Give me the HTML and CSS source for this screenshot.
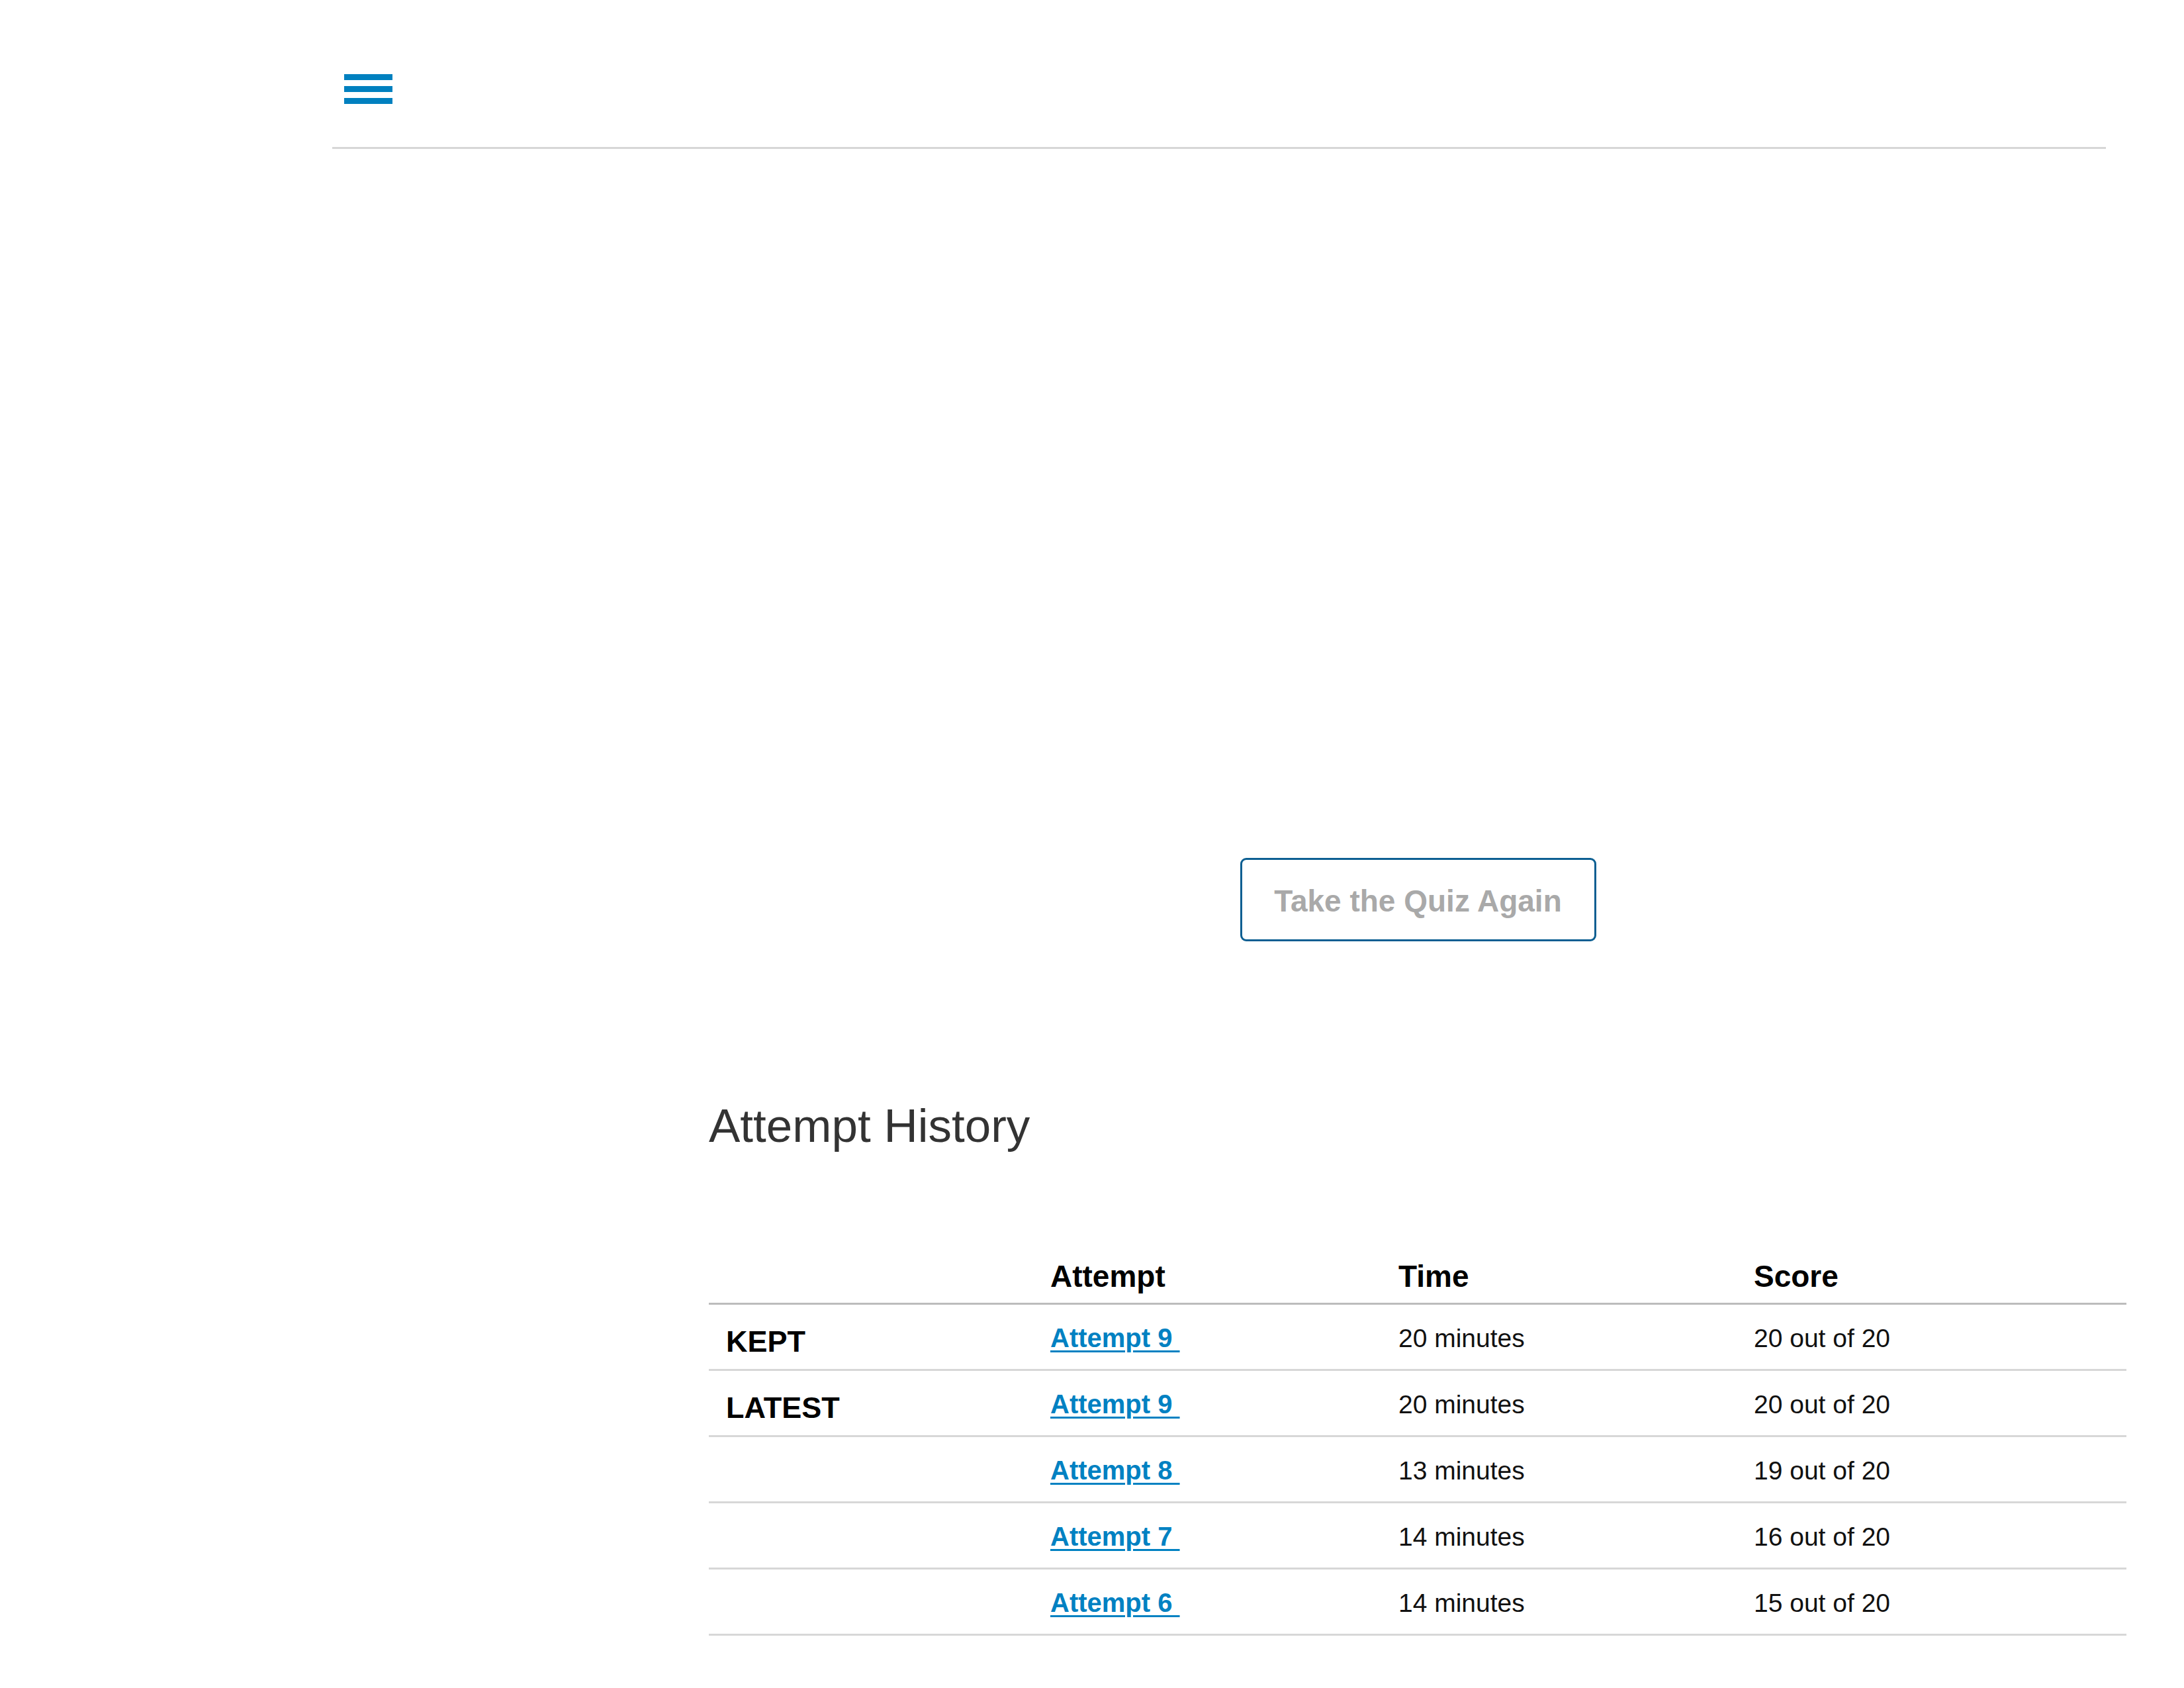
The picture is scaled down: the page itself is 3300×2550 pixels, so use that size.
FILE: index.html
```html
<!DOCTYPE html>
<html lang="en">
<head>
<meta charset="utf-8">
<title>Quiz Results</title>
<link rel="stylesheet" href="styles.css">
</head>
<body>
<header class="topbar">
  <button class="menu-toggle" type="button" aria-label="Open menu">
    <span class="menu-bar"></span>
    <span class="menu-bar"></span>
    <span class="menu-bar"></span>
  </button>
</header>
<main class="content">
  <section class="quiz-summary"></section>
  <div class="retake">
    <button class="retake-btn" type="button">Take the Quiz Again</button>
  </div>
  <h2 class="history-title">Attempt History</h2>
  <table class="history">
    <thead>
      <tr>
        <th class="col-label"></th>
        <th class="col-attempt">Attempt</th>
        <th class="col-time">Time</th>
        <th class="col-score">Score</th>
      </tr>
    </thead>
    <tbody>
      <tr>
        <th class="row-label" scope="row">KEPT</th>
        <td><a href="#" class="attempt-link">Attempt 9 </a></td>
        <td>20 minutes</td>
        <td>20 out of 20</td>
      </tr>
      <tr>
        <th class="row-label" scope="row">LATEST</th>
        <td><a href="#" class="attempt-link">Attempt 9 </a></td>
        <td>20 minutes</td>
        <td>20 out of 20</td>
      </tr>
      <tr>
        <th class="row-label" scope="row"></th>
        <td><a href="#" class="attempt-link">Attempt 8 </a></td>
        <td>13 minutes</td>
        <td>19 out of 20</td>
      </tr>
      <tr>
        <th class="row-label" scope="row"></th>
        <td><a href="#" class="attempt-link">Attempt 7 </a></td>
        <td>14 minutes</td>
        <td>16 out of 20</td>
      </tr>
      <tr>
        <th class="row-label" scope="row"></th>
        <td><a href="#" class="attempt-link">Attempt 6 </a></td>
        <td>14 minutes</td>
        <td>15 out of 20</td>
      </tr>
    </tbody>
  </table>
</main>
</body>
</html>
```

FILE: styles.css
```css
* {
  box-sizing: border-box;
}

html, body {
  margin: 0;
  padding: 0;
  background: #ffffff;
}

body {
  font-family: "Liberation Sans", Arial, Helvetica, sans-serif;
  color: #111111;
  width: 3300px;
  min-height: 2550px;
}

/* Top bar */
.topbar {
  margin-left: 502px;
  width: 2680px;
  padding: 112px 0 65px 18px;
  border-bottom: 3px solid #d7d7d7;
  display: flex;
}

.menu-toggle {
  display: flex;
  flex-direction: column;
  gap: 9px;
  width: 73px;
  padding: 0;
  margin: 0;
  border: 0;
  background: transparent;
  cursor: pointer;
}

.menu-bar {
  display: block;
  width: 73px;
  height: 9px;
  background: #0080bf;
}

/* Main content */
.content {
  margin-left: 1071px;
  width: 2142px;
  display: flex;
  flex-direction: column;
}

.quiz-summary {
  height: 1071px;
}

.retake {
  display: flex;
  justify-content: center;
}

.retake-btn {
  width: 538px;
  height: 126px;
  border: 3px solid #0c5f92;
  border-radius: 9px;
  background: #ffffff;
  color: #a9a9a9;
  font-family: "Liberation Sans", Arial, Helvetica, sans-serif;
  font-weight: 700;
  font-size: 46px;
  line-height: 1;
  padding: 3px 0 0 0;
  margin-left: 1px;
}

.history-title {
  margin: 243px 0 0 0;
  font-size: 71px;
  line-height: 71px;
  font-weight: 400;
  color: #333333;
}

/* Table */
.history {
  margin-top: 166px;
  width: 2142px;
  border-collapse: separate;
  border-spacing: 0;
  table-layout: fixed;
}

.history th,
.history td {
  padding: 0;
  text-align: left;
}

.history thead th {
  font-size: 46px;
  font-weight: 700;
  line-height: 53px;
  color: #000000;
  padding-bottom: 13px;
  border-bottom: 3px solid #bcbcbc;
  vertical-align: bottom;
}

.col-label { width: 516px; }
.col-attempt { width: 526px; }
.col-time { width: 537px; }
.col-score { width: 563px; }

.history tbody td,
.history tbody th {
  height: 100px;
  padding-top: 4px;
  border-bottom: 3px solid #d7d7d7;
  vertical-align: middle;
  font-size: 39px;
  line-height: 45px;
  color: #111111;
}

.history tbody .row-label {
  padding-left: 26px;
  padding-top: 14px;
  font-size: 45px;
  font-weight: 700;
  color: #000000;
}

.attempt-link {
  color: #0081c2;
  font-weight: 700;
  font-size: 40px;
  text-decoration: underline;
  text-decoration-thickness: 3px;
  text-underline-offset: 5px;
  white-space: pre;
}
```
